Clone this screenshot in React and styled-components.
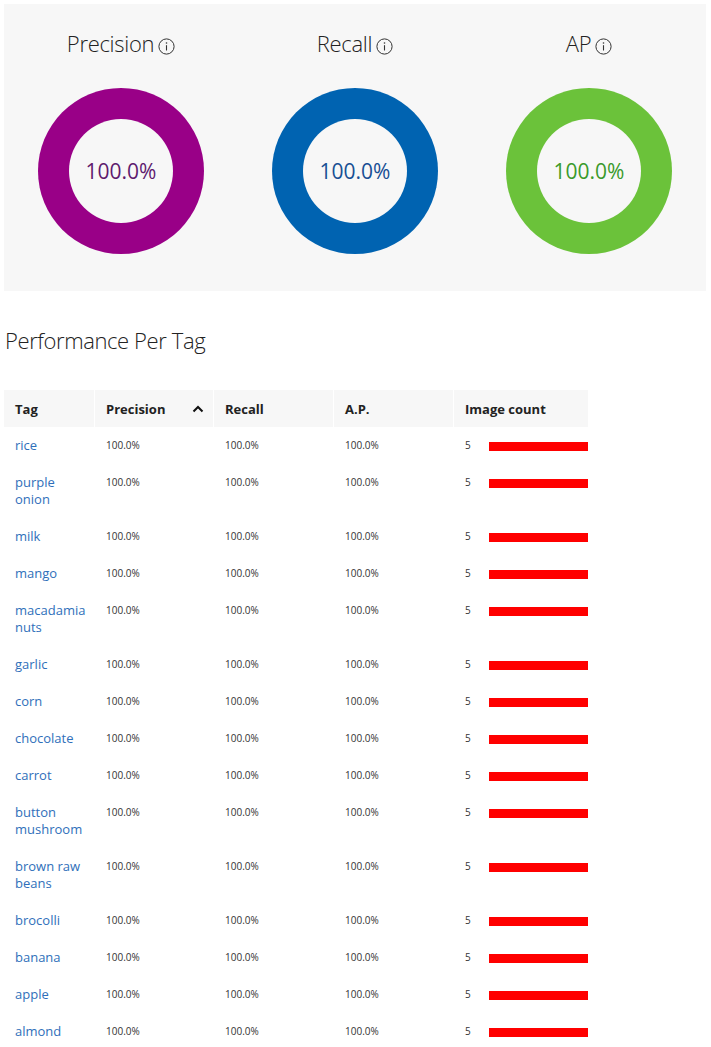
import React from "react";
import styled, { createGlobalStyle } from "styled-components";

const Global = createGlobalStyle`
  body {
    margin: 0;
    background: #fff;
    font-family: "Segoe UI", "Open Sans", "Noto Sans", sans-serif;
    color: #222;
  }
`;

const Page = styled.div`
  padding: 4px 5px 0 4px;
`;

const Summary = styled.section`
  background: #f7f7f7;
  height: 287px;
  display: grid;
  grid-template-columns: repeat(3, 1fr);
`;

const Metric = styled.div`
  display: flex;
  flex-direction: column;
  align-items: center;
  padding-top: 26px;
`;

const MetricTitle = styled.div`
  display: flex;
  align-items: flex-end;
  gap: 4px;
  font-size: 22px;
  font-weight: 300;
  letter-spacing: -0.3px;
  line-height: 26px;
  color: #222;
  height: 26px;
  svg {
    margin-bottom: 1px;
  }
`;

const Donut = styled.div`
  margin-top: 32px;
  width: 166px;
  height: 166px;
  border-radius: 50%;
  background: ${(p) => p.$ring};
  display: flex;
  align-items: center;
  justify-content: center;
`;

const Hole = styled.div`
  width: 104px;
  height: 104px;
  border-radius: 50%;
  background: #f7f7f7;
  display: flex;
  align-items: center;
  justify-content: center;
  font-size: 21px;
  color: ${(p) => p.$text};
`;

const Heading = styled.h2`
  margin: 35px 0 36px 1px;
  font-size: 22px;
  font-weight: 300;
  letter-spacing: -0.4px;
  line-height: 28px;
  color: #222;
`;

const Table = styled.table`
  width: 586px;
  border-collapse: separate;
  border-spacing: 1px 0;
  margin-left: -1px;
  table-layout: fixed;
`;

const Th = styled.th`
  width: ${(p) => p.$w}px;
  box-sizing: border-box;
  background: #f7f7f7;
  height: 37px;
  padding: 0 9px 0 11px;
  text-align: left;
  font-size: 13px;
  font-weight: 700;
  color: #222;
`;

const HeadInner = styled.div`
  display: flex;
  align-items: center;
  justify-content: space-between;
`;

const Td = styled.td`
  vertical-align: top;
  padding: 10px 0 10px 11px;
  font-size: 10px;
  line-height: 17px;
  color: #333;
`;

const TagLink = styled.a`
  display: block;
  font-size: 13px;
  line-height: 17px;
  color: #2f6fba;
  text-decoration: none;
  padding-right: 6px;
`;

const CountCell = styled.div`
  display: flex;
  align-items: center;
  height: 17px;
`;

const CountNum = styled.span`
  width: 24px;
  font-size: 10px;
`;

const Bar = styled.div`
  height: 9px;
  background: #ff0000;
  margin-top: 1px;
  flex: 1;
`;

function InfoIcon() {
  return (
    <svg width="17" height="17" viewBox="0 0 17 17">
      <circle cx="8.5" cy="8.5" r="7.6" fill="none" stroke="#333" strokeWidth="1" />
      <line x1="8.5" y1="7.2" x2="8.5" y2="12.5" stroke="#333" strokeWidth="1.1" />
      <circle cx="8.5" cy="5" r="0.8" fill="#333" />
    </svg>
  );
}

function Chevron() {
  return (
    <svg width="12" height="8" viewBox="0 0 12 8">
      <path d="M1.5 6.5 L6 2 L10.5 6.5" fill="none" stroke="#111" strokeWidth="2" />
    </svg>
  );
}

const metrics = [
  { name: "Precision", ring: "#990087", text: "#5e1a6e" },
  { name: "Recall", ring: "#0063b1", text: "#184f94" },
  { name: "AP", ring: "#6bc23a", text: "#3a9a2b" },
];

const tags = [
  "rice",
  "purple onion",
  "milk",
  "mango",
  "macadamia nuts",
  "garlic",
  "corn",
  "chocolate",
  "carrot",
  "button mushroom",
  "brown raw beans",
  "brocolli",
  "banana",
  "apple",
  "almond",
];

export default function App() {
  return (
    <Page>
      <Global />
      <Summary>
        {metrics.map((m) => (
          <Metric key={m.name}>
            <MetricTitle>
              {m.name}
              <InfoIcon />
            </MetricTitle>
            <Donut $ring={m.ring}>
              <Hole $text={m.text}>100.0%</Hole>
            </Donut>
          </Metric>
        ))}
      </Summary>
      <Heading>Performance Per Tag</Heading>
      <Table>
        <thead>
          <tr>
            <Th $w={90}>Tag</Th>
            <Th $w={118}>
              <HeadInner>
                Precision
                <Chevron />
              </HeadInner>
            </Th>
            <Th $w={119}>Recall</Th>
            <Th $w={119}>A.P.</Th>
            <Th $w={134}>Image count</Th>
          </tr>
        </thead>
        <tbody>
          {tags.map((t) => (
            <tr key={t}>
              <Td>
                <TagLink href="#">{t}</TagLink>
              </Td>
              <Td>100.0%</Td>
              <Td>100.0%</Td>
              <Td>100.0%</Td>
              <Td>
                <CountCell>
                  <CountNum>5</CountNum>
                  <Bar />
                </CountCell>
              </Td>
            </tr>
          ))}
        </tbody>
      </Table>
    </Page>
  );
}
